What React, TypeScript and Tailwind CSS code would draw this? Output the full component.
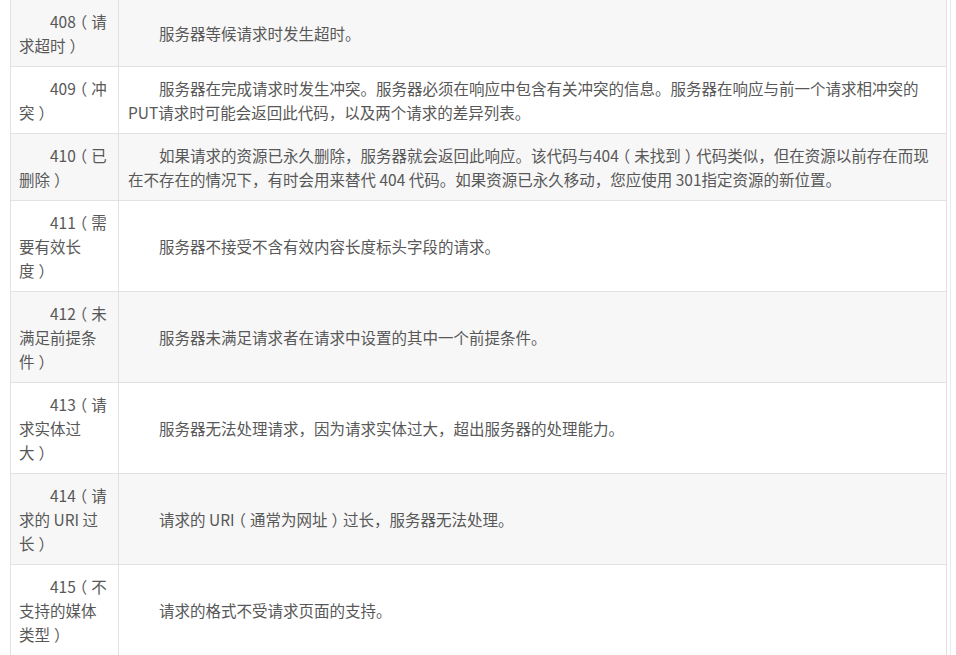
import React from 'react';

const rows: { code: string; desc: string }[] = [
  { code: '408（请求超时）', desc: '服务器等候请求时发生超时。' },
  {
    code: '409（冲突）',
    desc: '服务器在完成请求时发生冲突。服务器必须在响应中包含有关冲突的信息。服务器在响应与前一个请求相冲突的PUT请求时可能会返回此代码，以及两个请求的差异列表。',
  },
  {
    code: '410（已删除）',
    desc: '如果请求的资源已永久删除，服务器就会返回此响应。该代码与404（未找到）代码类似，但在资源以前存在而现在不存在的情况下，有时会用来替代 404 代码。如果资源已永久移动，您应使用 301指定资源的新位置。',
  },
  { code: '411（需要有效长度）', desc: '服务器不接受不含有效内容长度标头字段的请求。' },
  { code: '412（未满足前提条件）', desc: '服务器未满足请求者在请求中设置的其中一个前提条件。' },
  { code: '413（请求实体过大）', desc: '服务器无法处理请求，因为请求实体过大，超出服务器的处理能力。' },
  { code: '414（请求的 URI 过长）', desc: '请求的 URI（通常为网址）过长，服务器无法处理。' },
  { code: '415（不支持的媒体类型）', desc: '请求的格式不受请求页面的支持。' },
];

// the source font centres full-width brackets; Noto puts them at the edge
function Text({ value }: { value: string }) {
  const parts = value.split(/([（）])/);
  return (
    <>
      {parts.map((p, i) =>
        p === '（' ? (
          <span key={i} className="relative -left-[4px]">（</span>
        ) : p === '）' ? (
          <span key={i} className="relative left-[4px]">）</span>
        ) : (
          <React.Fragment key={i}>{p}</React.Fragment>
        )
      )}
    </>
  );
}

export default function App() {
  return (
    <div className="h-[655px] w-[956px] overflow-hidden bg-white font-['Noto_Sans_CJK_SC','Noto_Sans',sans-serif]">
      <div className="flex pl-[10px]">
        <table className="w-[937px] border-collapse text-[15.5px] leading-[24px] text-[#585858]">
          <tbody>
            {rows.map((r, i) => (
              <tr key={r.code} className={i % 2 === 0 ? 'bg-[#f7f7f7]' : 'bg-white'}>
                <td className="w-[108px] border border-t-0 border-[#e2e2e2] px-[8px] py-[9px] align-middle indent-[31px]">
                  <Text value={r.code} />
                </td>
                <td className="border border-t-0 border-[#e2e2e2] py-[9px] pl-[9px] pr-[10px] align-middle indent-[31px]">
                  <Text value={r.desc} />
                </td>
              </tr>
            ))}
          </tbody>
        </table>
        <div className="ml-[3px] w-px bg-[#ececec]" />
      </div>
    </div>
  );
}
